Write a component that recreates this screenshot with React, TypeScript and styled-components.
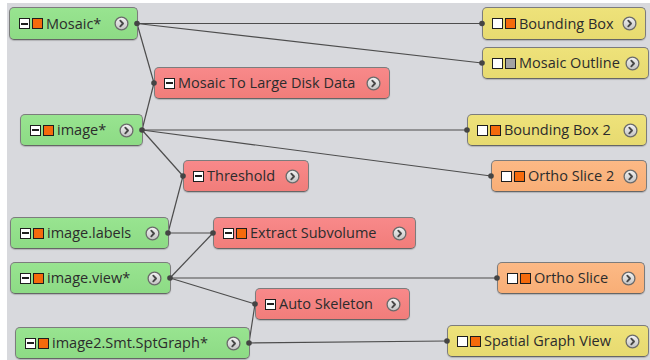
import React from "react";
import styled, { createGlobalStyle } from "styled-components";

const GlobalStyle = createGlobalStyle`
  html, body { margin: 0; padding: 0; background: #ffffff; }
  body { font-family: "Open Sans", "Liberation Sans", sans-serif; }
`;

const OX = 7;
const OY = 3;

type Kind = "data" | "compute" | "display" | "slice";
type Chip = "minus" | "blank" | "orange" | "grey";

interface NodeDef {
  id: string;
  label: string;
  kind: Kind;
  x: number;
  y: number;
  w: number;
  h: number;
  chips: Chip[];
}

const nodes: NodeDef[] = [
  { id: "mosaic", label: "Mosaic*", kind: "data", x: 9, y: 7, w: 129, h: 33, chips: ["minus", "orange"] },
  { id: "mtldd", label: "Mosaic To Large Disk Data", kind: "compute", x: 154, y: 67, w: 236, h: 32, chips: ["minus"] },
  { id: "image", label: "image*", kind: "data", x: 20, y: 114, w: 123, h: 32, chips: ["minus", "orange"] },
  { id: "threshold", label: "Threshold", kind: "compute", x: 183, y: 160, w: 126, h: 32, chips: ["minus"] },
  { id: "labels", label: "image.labels", kind: "data", x: 10, y: 217, w: 159, h: 32, chips: ["minus", "orange"] },
  { id: "extract", label: "Extract Subvolume", kind: "compute", x: 213, y: 217, w: 203, h: 32, chips: ["minus", "orange"] },
  { id: "view", label: "image.view*", kind: "data", x: 10, y: 262, w: 161, h: 32, chips: ["minus", "orange"] },
  { id: "skel", label: "Auto Skeleton", kind: "compute", x: 255, y: 288, w: 155, h: 32, chips: ["minus"] },
  { id: "graph", label: "image2.Smt.SptGraph*", kind: "data", x: 15, y: 327, w: 235, h: 32, chips: ["minus", "orange"] },
  { id: "bbox", label: "Bounding Box", kind: "display", x: 482, y: 7, w: 164, h: 33, chips: ["blank", "orange"] },
  { id: "outline", label: "Mosaic Outline", kind: "display", x: 482, y: 47, w: 167, h: 32, chips: ["blank", "grey"] },
  { id: "bbox2", label: "Bounding Box 2", kind: "display", x: 467, y: 114, w: 180, h: 32, chips: ["blank", "orange"] },
  { id: "ortho2", label: "Ortho Slice 2", kind: "slice", x: 491, y: 160, w: 156, h: 32, chips: ["blank", "orange"] },
  { id: "ortho", label: "Ortho Slice", kind: "slice", x: 497, y: 262, w: 148, h: 32, chips: ["blank", "orange"] },
  { id: "spatial", label: "Spatial Graph View", kind: "display", x: 447, y: 325, w: 202, h: 32, chips: ["blank", "orange"] },
];

const edges: [string, string][] = [
  ["mosaic", "bbox"],
  ["mosaic", "outline"],
  ["mosaic", "mtldd"],
  ["image", "mtldd"],
  ["image", "bbox2"],
  ["image", "ortho2"],
  ["image", "threshold"],
  ["labels", "threshold"],
  ["labels", "extract"],
  ["view", "extract"],
  ["view", "ortho"],
  ["view", "skel"],
  ["graph", "skel"],
  ["graph", "spatial"],
];

const palette: Record<Kind, { top: string; base: string }> = {
  data: { top: "#98e490", base: "#8ddb85" },
  compute: { top: "#f8898a", base: "#f17d7a" },
  display: { top: "#eee27a", base: "#e7da70" },
  slice: { top: "#fcb985", base: "#f8ae76" },
};

const Page = styled.div`
  padding: ${OY}px 0 0 ${OX}px;
  width: 650px;
  height: 360px;
  box-sizing: border-box;
  overflow: hidden;
`;

const Canvas = styled.div`
  position: relative;
  width: ${650 - OX}px;
  height: ${360 - OY}px;
  background: #d8d9dd;
  overflow: hidden;
`;

const Layer = styled.svg<{ $z: number }>`
  position: absolute;
  left: 0;
  top: 0;
  width: 100%;
  height: 100%;
  z-index: ${(p) => p.$z};
  pointer-events: none;
`;

const NodeBox = styled.div<{ $kind: Kind }>`
  position: absolute;
  z-index: 1;
  box-sizing: border-box;
  display: flex;
  align-items: center;
  gap: 3px;
  padding: 0 8px 0 9px;
  border: 1px solid #7c7c7c;
  border-bottom-color: #666;
  border-radius: 5px;
  background: linear-gradient(
    to bottom,
    ${(p) => palette[p.$kind].top},
    ${(p) => palette[p.$kind].base}
  );
  box-shadow: 0 1px 1px rgba(0, 0, 0, 0.18);
`;

const Chips = styled.div`
  display: flex;
  align-items: center;
  gap: 2px;
`;

const ChipBox = styled.span<{ $chip: Chip }>`
  position: relative;
  display: block;
  width: 11px;
  height: 11px;
  box-sizing: border-box;
  border: 1px solid #1e1e1e;
  background: ${(p) =>
    p.$chip === "orange" ? "#f56a0c" : p.$chip === "grey" ? "#a3a3a3" : "#ffffff"};
  &::after {
    content: "";
    display: ${(p) => (p.$chip === "minus" ? "block" : "none")};
    position: absolute;
    left: 1px;
    right: 1px;
    top: 3.5px;
    height: 2px;
    background: #1e1e1e;
  }
`;

const Label = styled.span`
  font-family: "Open Sans", "Liberation Sans", sans-serif;
  font-size: 14.5px;
  line-height: 18px;
  color: #2c2c2c;
  white-space: nowrap;
`;

const MenuButton = styled.svg`
  margin-left: auto;
  flex: none;
  display: block;
`;

function ExpandButton() {
  return (
    <MenuButton width="15" height="15" viewBox="0 0 15 15">
      <defs>
        <linearGradient id="btnGrad" x1="0" y1="0" x2="0" y2="1">
          <stop offset="0" stopColor="#f4f4f4" />
          <stop offset="1" stopColor="#c2c2c2" />
        </linearGradient>
      </defs>
      <circle cx="7.5" cy="7.5" r="6.4" fill="url(#btnGrad)" stroke="#6a6a6a" strokeWidth="1.3" />
      <path
        d="M6.3 4.7 L9 7.5 L6.3 10.3"
        fill="none"
        stroke="#474747"
        strokeWidth="1.9"
        strokeLinecap="round"
        strokeLinejoin="round"
      />
    </MenuButton>
  );
}

function Node({ n }: { n: NodeDef }) {
  return (
    <NodeBox
      $kind={n.kind}
      style={{ left: n.x - OX, top: n.y - OY, width: n.w, height: n.h }}
    >
      <Chips>
        {n.chips.map((c, i) => (
          <ChipBox key={i} $chip={c} />
        ))}
      </Chips>
      <Label>{n.label}</Label>
      <ExpandButton />
    </NodeBox>
  );
}

const byId: Record<string, NodeDef> = Object.fromEntries(nodes.map((n) => [n.id, n]));

function outPort(n: NodeDef) {
  return { x: n.x + n.w - 1 - OX, y: n.y + n.h / 2 - OY };
}
function inPort(n: NodeDef) {
  return { x: n.x - OX, y: n.y + n.h / 2 - OY };
}

export default function App() {
  const sources = Array.from(new Set(edges.map((e) => e[0])));
  const targets = Array.from(new Set(edges.map((e) => e[1])));
  return (
    <>
      <GlobalStyle />
      <Page>
        <Canvas>
          <Layer $z={0}>
            {edges.map(([a, b], i) => {
              const p = outPort(byId[a]);
              const q = inPort(byId[b]);
              return (
                <line
                  key={i}
                  x1={p.x}
                  y1={p.y}
                  x2={q.x}
                  y2={q.y}
                  stroke="#4d4d4d"
                  strokeWidth="1.2"
                />
              );
            })}
          </Layer>
          {nodes.map((n) => (
            <Node key={n.id} n={n} />
          ))}
          <Layer $z={2}>
            {sources.map((s) => {
              const p = outPort(byId[s]);
              return <circle key={"o" + s} cx={p.x} cy={p.y} r="2.8" fill="#444" />;
            })}
            {targets.map((t) => {
              const p = inPort(byId[t]);
              return <circle key={"i" + t} cx={p.x} cy={p.y} r="2.8" fill="#444" />;
            })}
          </Layer>
        </Canvas>
      </Page>
    </>
  );
}
